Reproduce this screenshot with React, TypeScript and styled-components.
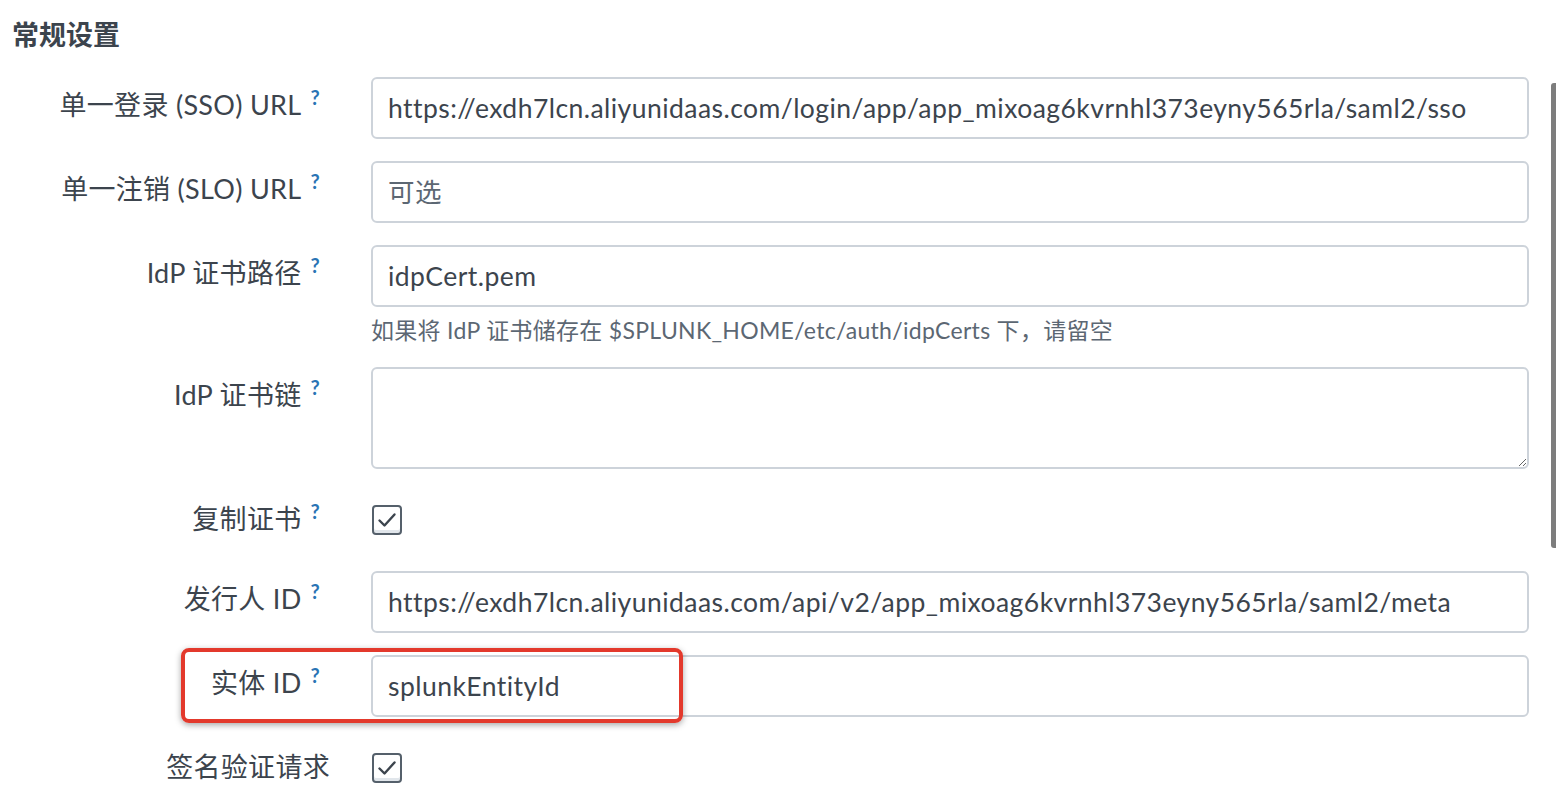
import React from "react";
import styled, { createGlobalStyle } from "styled-components";

const GlobalStyle = createGlobalStyle`
    html, body {
        margin: 0;
        padding: 0;
        background: #ffffff;
    }
    body {
        font-family: Lato, "Noto Sans CJK SC", sans-serif;
        color: #3c444d;
    }
`;

const Page = styled.div`
    position: relative;
    width: 1556px;
    height: 798px;
    overflow: hidden;
    padding: 17px 0 0 12px;
    box-sizing: border-box;
`;

const Title = styled.h2`
    margin: 0 0 25px 0;
    font-size: 27px;
    line-height: 35px;
    font-weight: 700;
    color: #3c444d;
`;

const Form = styled.div`
    display: flex;
    flex-direction: column;
    gap: 22px;
`;

const Row = styled.div`
    position: relative;
    display: flex;
    align-items: flex-start;
`;

const Label = styled.div<{ $bare?: boolean }>`
    width: ${({ $bare }) => ($bare ? "318px" : "308px")};
    margin-right: ${({ $bare }) => ($bare ? "-10px" : "0")};
    flex: none;
    padding-top: 13px;
    font-size: 27px;
    line-height: 30px;
    letter-spacing: 0.3px;
    text-align: right;
    white-space: nowrap;
    color: #3c444d;
`;

const Help = styled.sup`
    margin-left: 9px;
    font-size: 20px;
    font-weight: 700;
    line-height: 0;
    color: #2a74b5;
    vertical-align: 10px;
`;

const Field = styled.div`
    margin-left: 51px;
    width: 1158px;
    display: flex;
    flex-direction: column;
`;

const Input = styled.input`
    box-sizing: border-box;
    width: 100%;
    height: 62px;
    padding: 0 15px;
    border: 2px solid #cdd3da;
    border-radius: 6px;
    font-family: Lato, "Noto Sans CJK SC", sans-serif;
    font-size: 26.5px;
    letter-spacing: 0.45px;
    color: #3c444d;
    background: #fff;
    outline: none;

    &::placeholder {
        color: #5c6773;
    }
`;

const TextArea = styled.textarea`
    box-sizing: border-box;
    width: 100%;
    height: 102px;
    padding: 12px 15px;
    border: 2px solid #cdd3da;
    border-radius: 6px;
    font-family: Lato, "Noto Sans CJK SC", sans-serif;
    font-size: 26px;
    color: #3c444d;
    resize: vertical;
    outline: none;
    display: block;
`;

const HelpText = styled.div`
    margin-top: 8px;
    font-size: 23px;
    line-height: 30px;
    letter-spacing: 0.3px;
    color: #5c6773;
`;

const CheckRow = styled.div`
    height: 58px;
    padding-top: 14px;
    box-sizing: border-box;
    margin-left: 52px;
`;

const Box = styled.span`
    display: flex;
    align-items: center;
    justify-content: center;
    width: 30px;
    height: 30px;
    box-sizing: border-box;
    border: 2px solid #55606b;
    border-radius: 4px;
    background: #fff;
    box-shadow: inset 0 -3px 0 #e1e6eb;
`;

const Highlight = styled.div`
    position: absolute;
    left: 169px;
    top: -7px;
    width: 502px;
    height: 75px;
    box-sizing: border-box;
    border: 4px solid #e3392c;
    border-radius: 8px;
    box-shadow: 0 2px 6px rgba(0, 0, 0, 0.35);
    pointer-events: none;
`;

const ScrollThumb = styled.div`
    position: absolute;
    right: 0;
    top: 83px;
    width: 5px;
    height: 465px;
    border-radius: 3px 0 0 3px;
    background: #7d7d7d;
`;

const Check = () => (
    <Box>
        <svg width="20" height="16" viewBox="0 0 20 16">
            <path d="M2.5 8.5 L7.5 13.5 L17.5 2.5" fill="none" stroke="#3c444d" strokeWidth="2.4" strokeLinecap="round" strokeLinejoin="round" />
        </svg>
    </Box>
);

const FieldLabel: React.FC<{ text: string }> = ({ text }) => (
    <Label>
        {text}
        <Help>?</Help>
    </Label>
);

export default function App() {
    return (
        <>
            <GlobalStyle />
            <Page>
                <Title>常规设置</Title>
                <Form>
                    <Row>
                        <FieldLabel text="单一登录 (SSO) URL" />
                        <Field>
                            <Input readOnly value="https://exdh7lcn.aliyunidaas.com/login/app/app_mixoag6kvrnhl373eyny565rla/saml2/sso" />
                        </Field>
                    </Row>
                    <Row>
                        <FieldLabel text="单一注销 (SLO) URL" />
                        <Field>
                            <Input placeholder="可选" />
                        </Field>
                    </Row>
                    <Row>
                        <FieldLabel text="IdP 证书路径" />
                        <Field>
                            <Input readOnly value="idpCert.pem" />
                            <HelpText>如果将 IdP 证书储存在 $SPLUNK_HOME/etc/auth/idpCerts 下，请留空</HelpText>
                        </Field>
                    </Row>
                    <Row>
                        <FieldLabel text="IdP 证书链" />
                        <Field>
                            <TextArea />
                        </Field>
                    </Row>
                    <Row>
                        <FieldLabel text="复制证书" />
                        <CheckRow>
                            <Check />
                        </CheckRow>
                    </Row>
                    <Row>
                        <FieldLabel text="发行人 ID" />
                        <Field>
                            <Input readOnly value="https://exdh7lcn.aliyunidaas.com/api/v2/app_mixoag6kvrnhl373eyny565rla/saml2/meta" />
                        </Field>
                    </Row>
                    <Row>
                        <FieldLabel text="实体 ID" />
                        <Field>
                            <Input readOnly value="splunkEntityId" />
                        </Field>
                        <Highlight />
                    </Row>
                    <Row>
                        <Label $bare>签名验证请求</Label>
                        <CheckRow>
                            <Check />
                        </CheckRow>
                    </Row>
                </Form>
                <ScrollThumb />
            </Page>
        </>
    );
}
